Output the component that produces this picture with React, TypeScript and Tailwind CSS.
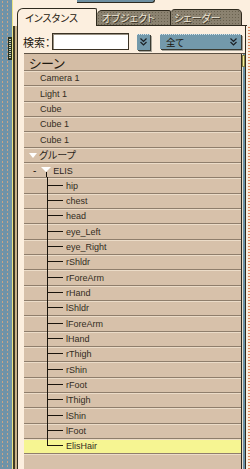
import React from "react";

type Row = { label: string; kind: "top" | "group" | "figure" | "child"; last?: boolean };

const children = [
  "hip",
  "chest",
  "head",
  "eye_Left",
  "eye_Right",
  "rShldr",
  "rForeArm",
  "rHand",
  "lShldr",
  "lForeArm",
  "lHand",
  "rThigh",
  "rShin",
  "rFoot",
  "lThigh",
  "lShin",
  "lFoot",
  "ElisHair",
];

const rows: Row[] = [
  { label: "Camera 1", kind: "top" },
  { label: "Light 1", kind: "top" },
  { label: "Cube", kind: "top" },
  { label: "Cube 1", kind: "top" },
  { label: "Cube 1", kind: "top" },
  { label: "グループ", kind: "group" },
  { label: "ELIS", kind: "figure" },
  ...children.map((c, i) => ({ label: c, kind: "child" as const, last: i === children.length - 1 })),
];

const heights = ["h-[15px]", "h-[16px]", "h-[15px]"];

const rowBg =
  "bg-[linear-gradient(to_bottom,#8f7e6c_0,#8f7e6c_1px,#ecdcc8_1px,#ecdcc8_2px,#d7c1aa_2px)]";
const rowSel =
  "bg-[linear-gradient(to_bottom,#8f7e6c_0,#8f7e6c_1px,#ecdcc8_1px,#ecdcc8_2px,#f6f592_2px)]";

const jp = "font-['Noto_Sans_CJK_JP',sans-serif] [font-feature-settings:'palt']";

function Chevrons() {
  return (
    <svg width="7" height="8" viewBox="0 0 7 8">
      <path d="M0.5 0.5 L3.5 3.5 L6.5 0.5 M0.5 4 L3.5 7 L6.5 4" stroke="#1c2024" strokeWidth="1.2" fill="none" />
    </svg>
  );
}

function ListRow({ row, index }: { row: Row; index: number }) {
  const sel = row.label === "ElisHair";
  return (
    <div className={`${heights[index % 3]} shrink-0 flex items-stretch ${sel ? rowSel : rowBg}`}>
      {row.kind === "top" && (
        <span className="pl-[16px] self-center pt-[1px] text-[9px] leading-[12px] text-[#332c22]">{row.label}</span>
      )}
      {row.kind === "group" && (
        <div className="flex items-center pl-[5px] pt-[1px]">
          <div className="w-0 h-0 border-l-[4px] border-r-[4px] border-t-[5px] border-l-transparent border-r-transparent border-t-white" />
          <span className={`ml-[2px] text-[10px] leading-[12px] text-[#2c261c] ${jp}`}>{row.label}</span>
        </div>
      )}
      {row.kind === "figure" && (
        <div className="flex items-stretch pl-[9px]">
          <span className="self-center pt-[2px] text-[10px] leading-[12px] text-[#1c160e]">-</span>
          <div className="ml-[5px] flex flex-col items-center w-[10px] pt-[5px]">
            <div className="w-0 h-0 border-l-[5px] border-r-[5px] border-t-[5px] border-l-transparent border-r-transparent border-t-white" />
            <div className="flex-1 w-px bg-[#1a140c]" />
          </div>
          <span className="ml-[2px] self-center pt-[2px] text-[9px] leading-[12px] text-[#2c261c]">{row.label}</span>
        </div>
      )}
      {row.kind === "child" && (
        <div className="flex items-stretch">
          <div className="ml-[23px] w-[16px] flex flex-col">
            <div className="flex-1 border-l border-b border-[#1a140c]" />
            <div className={`flex-1 ${row.last ? "" : "border-l border-[#1a140c]"}`} />
          </div>
          <span className="ml-[3px] self-center pt-[1px] text-[9px] leading-[12px] text-[#332c22]">{row.label}</span>
        </div>
      )}
    </div>
  );
}

export default function App() {
  return (
    <div className="w-[250px] h-[469px] flex overflow-hidden bg-[#fcefdf] font-['Liberation_Sans',Arial,sans-serif]">
      <div className="w-[12px] shrink-0 flex flex-col bg-[#6f93a8] bg-[radial-gradient(circle,#c9a486_0.5px,transparent_1px)] bg-[length:5px_4px]">
        <div className="mt-[37px] ml-[8px] w-[4px] h-[23px] border border-[#26301f] bg-[repeating-linear-gradient(to_bottom,#2c3628_0,#2c3628_1px,#c3d0bb_1px,#c3d0bb_2px)]" />
      </div>
      <div className="w-px shrink-0 bg-[#ece486]" />

      <div className="flex-1 flex flex-col relative">
        <div className="absolute left-[64px] top-0 w-[78px] h-[3px] bg-[#6d8ea0] border-b border-r border-[#2e2a20] rounded-br-[3px]" />

        <div className="h-[26px] shrink-0 flex items-end pl-[4px]">
          <div className={`w-[80px] h-[18px] border-l border-t border-r border-[#2f2a1e] rounded-tl-[6px] rounded-tr-[2px] bg-[#fcefdf] pl-[7px] pt-[3px] text-[10px] leading-[12px] text-[#1e180e] ${jp}`}>
            インスタンス
          </div>
          <div className={`w-[74px] h-[16px] border-t border-r border-b border-[#2f2a1e] rounded-tl-[5px] rounded-tr-[2px] bg-[#8b8270] bg-[radial-gradient(circle,#6a624f_0.6px,transparent_1px)] bg-[length:3px_3px] pl-[5px] pt-[1px] text-[10px] leading-[12px] text-[#ede6d6] [text-shadow:1px_1px_0_#3a3226] ${jp}`}>
            オブジェクト
          </div>
          <div className={`w-[71px] h-[17px] border-t border-r border-b border-[#2f2a1e] rounded-tl-[4px] rounded-tr-[5px] bg-[#8b8270] bg-[radial-gradient(circle,#6a624f_0.6px,transparent_1px)] bg-[length:3px_3px] pl-[3px] pt-[2px] text-[10px] leading-[12px] text-[#ede6d6] [text-shadow:1px_1px_0_#3a3226] ${jp}`}>
            シェーダー
          </div>
          <div className="w-[5px] h-px bg-[#2f2a1e]" />
        </div>

        <div className="flex-1 flex min-h-0">
          <div className="w-[2px] shrink-0 bg-[#3f3a26]" />
          <div className="w-[2px] shrink-0 bg-[#c9b28a]" />
          <div className="w-[229px] shrink-0 border-l border-r border-[#2f2a1e] flex flex-col">
            <div className="mt-[7px] pl-[5px] flex items-center h-[17px] shrink-0">
              <span className={`w-[29px] text-[11px] leading-[14px] text-[#1e180e] ${jp}`}>検索：</span>
              <div className="w-[77px] h-[17px] bg-white border border-[#3a3224] shadow-[inset_1px_1px_0_#9a9284]" />
              <div className="ml-[8px] w-[13px] h-[16px] flex items-center justify-center bg-[#7399ab] border-t border-dotted border-[#d2e2ea] shadow-[1px_1px_0_#3a3a30,2px_2px_0_#a9a59a]">
                <Chevrons />
              </div>
              <div className="ml-[10px] w-[81px] h-[15px] flex items-center justify-between pl-[6px] pr-[4px] bg-[#7399ab] border-t border-dotted border-[#d2e2ea] shadow-[1px_1px_0_#3a3a30,2px_2px_0_#a9a59a]">
                <span className={`text-[9.5px] leading-[12px] text-[#1a160e] ${jp}`}>全て</span>
                <Chevrons />
              </div>
            </div>

            <div className="mt-[3px] ml-[6px] flex-1 flex min-h-0 border-t border-[#5e5244]">
              <div className="w-[218px] shrink-0 flex flex-col border-r border-[#2f2a1e] overflow-hidden">
                <div className={`h-[16px] shrink-0 bg-[#d4bda5] pl-[5px] flex items-center text-[13px] leading-[15px] text-[#1e180e] ${jp}`}>
                  シーン
                </div>
                {rows.map((r, i) => (
                  <ListRow key={i} row={r} index={i} />
                ))}
                <div className={`flex-1 ${rowBg}`} />
              </div>
              <div className="w-[3px] shrink-0 flex flex-col border-l border-[#e8e0cf] bg-[#6a90a4]">
                <div className="mt-[1px] h-[12px] -ml-px w-[3px] bg-[#f2ec9a] border border-[#8a8040]" />
              </div>
            </div>
          </div>
          <div className="w-[2px] shrink-0 bg-[#fcefdf]" />
          <div className="flex-1 bg-[#fbe6d6] bg-[radial-gradient(circle,#e28a62_0.6px,transparent_1px)] bg-[length:2px_3px]" />
        </div>
      </div>
    </div>
  );
}
